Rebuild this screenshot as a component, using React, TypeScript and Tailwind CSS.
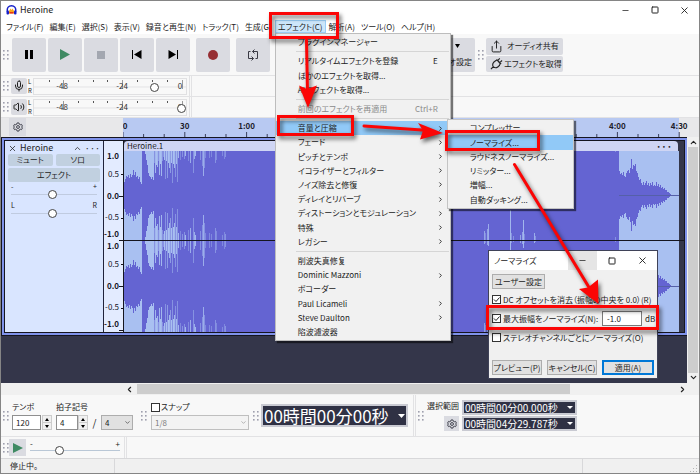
import type { ReactNode } from 'react'
import { ChevronDown, ChevronLeft, ChevronRight, ChevronUp, Mic, Minus, Share, Square, Volume2, X } from 'lucide-react'

interface MenuEntry {
  label: string
  shortcut?: string
  disabled?: boolean
  active?: boolean
  submenu?: boolean
}

const menuGroups: MenuEntry[][] = [
  [{ label: 'プラグインマネージャー' }],
  [
    { label: 'リアルタイムエフェクトを登録', shortcut: 'E' },
    { label: 'ほかのエフェクトを取得...' },
    { label: 'AIエフェクトを取得...' },
  ],
  [{ label: '前回のエフェクトを再適用', shortcut: 'Ctrl+R', disabled: true }],
  [
    { label: '音量と圧縮', active: true, submenu: true },
    { label: 'フェード', submenu: true },
    { label: 'ピッチとテンポ', submenu: true },
    { label: 'イコライザーとフィルター', submenu: true },
    { label: 'ノイズ除去と修復', submenu: true },
    { label: 'ディレイとリバーブ', submenu: true },
    { label: 'ディストーションとモジュレーション', submenu: true },
    { label: '特殊', submenu: true },
    { label: 'レガシー', submenu: true },
  ],
  [
    { label: '削波失真修复' },
    { label: 'Dominic Mazzoni', submenu: true },
    { label: 'ボコーダー' },
    { label: 'Paul Licameli', submenu: true },
    { label: 'Steve Daulton', submenu: true },
    { label: '陷波濾波器' },
  ],
]

const volumeItems = ['コンプレッサー...', 'ノーマライズ...', 'ラウドネスノーマライズ...', 'リミッター...', '増幅...', '自動ダッキング...']

const times = ['0', '30', '1:00', '1:30', '2:00', '2:30', '3:00', '3:30', '4:00', '4:30']

// [x, depth from the clip edge, opacity]
const quiet = [31, 28, 25, 26, 24, 27, 23, 26, 24, 19, 24, 21, 26, 25, 28, 26, 31, 33]
const rise = [3, 9, 14, 22, 25, 26, 28, 26, 29]
const peaks: [number, number, number][] = [
  [30, 12, 0.5], [31, 22, 0.9], [32, 14, 1], [33, 16, 0.9], [34, 10, 0.5], [35, 24, 0.9], [36, 13, 1],
  [37, 25, 0.9], [38, 10, 0.5], [39, 6, 0.5], [40, 9, 1], [41, 28, 0.5], [42, 10, 1], [43, 27, 0.6],
  [44, 12, 1], [45, 17, 0.9], [46, 22, 0.6], [47, 12, 1], [48, 32, 0.5], [49, 13, 1], [50, 17, 0.9],
  [51, 26, 0.5], [52, 13, 0.9], [53, 31, 0.5], [54, 7, 0.9], [56, 9, 0.4], [58, 6, 0.5], [60, 8, 0.5],
  [61, 5, 0.9], [64, 10, 0.4], [66, 12, 0.8], [69, 22, 0.5], [70, 8, 0.8], [71, 5, 0.9], [76, 9, 0.5],
  [78, 15, 0.5], [79, 25, 0.8], [80, 17, 0.5], [81, 7, 0.4], [85, 7, 0.4], [87, 6, 0.4], [91, 12, 0.5],
  [92, 9, 0.4], [98, 5, 0.4], [100, 8, 0.4], [101, 6, 0.5],
]
const latePeaks: [number, number, number][] = [
  [360, 9, 0.7], [361, 7, 0.4], [363, 11, 0.7], [364, 16, 0.8], [386, 30, 0.9], [387, 7, 0.5], [389, 4, 0.5],
  [396, 5, 0.7], [398, 8, 0.7], [399, 20, 0.9], [400, 6, 0.4], [410, 7, 0.8], [411, 4, 0.5], [491, 3, 0.5],
]
const tail = [
  24, 21, 22, 20, 23, 19, 18, 22, 24, 25, 22, 27, 36, 26, 30, 29, 31, 24, 22, 18, 15, 16, 12, 10, 13, 10, 12, 14,
  10, 12, 9, 12, 10, 13, 9, 10, 9, 13, 9, 11, 8, 10, 7, 8, 6, 7, 5, 5, 3, 3, 2, 1,
]

function Grip() {
  return (
    <svg className="h-[10px] w-[6px] shrink-0" fill="#9fa0ae">
      {[0, 4].map((x) => [0, 4, 8].map((y) => <rect key={`${x}-${y}`} x={x} y={y} width="1.6" height="1.6" />))}
    </svg>
  )
}

function ToolButton({ label, children }: { label: string; children: ReactNode }) {
  return (
    <button aria-label={label} className="flex h-[34px] w-[34px] shrink-0 items-center justify-center rounded-xs bg-[#dadbe1]">
      {children}
    </button>
  )
}

function Gear() {
  return (
    <svg viewBox="0 0 16 16" className="size-[10px]" fill="none" stroke="#3b3c48" strokeWidth="1.5">
      <path d="M6.5 1.5h3l.5 2 1.6.9 2-.6 1.5 2.6L13.700 8l1.400 1.600-1.500 2.600-2-.6-1.600.9-.5 2h-3l-.5-2-1.600-.9-2 .6L.9 9.600 2.300 8 .9 6.400l1.500-2.600 2 .6L6 3.500z" />
      <circle cx="8" cy="8" r="2.300" />
    </svg>
  )
}

function Slider({ label, value }: { label: string; value: number }) {
  return (
    <input
      type="range"
      aria-label={label}
      defaultValue={value}
      className="block h-[9px] w-full appearance-none bg-transparent [&::-webkit-slider-thumb]:size-[9px] [&::-webkit-slider-thumb]:appearance-none [&::-webkit-slider-thumb]:rounded-full [&::-webkit-slider-thumb]:border [&::-webkit-slider-thumb]:border-[#444] [&::-webkit-slider-thumb]:bg-white"
    />
  )
}

function Meter({ label, value, icon }: { label: string; value: number; icon: ReactNode }) {
  return (
    <div className="flex h-[21px] items-center border-b border-[#e2e2e4] bg-[#f8f8f8] pl-[2px]">
      <Grip />
      <button aria-label={label} className="ml-[2px] flex size-[16px] items-center justify-center rounded-xs bg-[#dadbe1]">
        {icon}
      </button>
      <div className="w-[6px] pl-px text-[6px] leading-[9px] text-[#222]">
        <div>L</div>
        <div>R</div>
      </div>
      <div className="relative h-[17px] w-[154px] border border-[#e0e0e2]">
        <svg className="absolute inset-0 size-full" stroke="#555">
          <path d="M0 8H153" stroke="#e3e3e5" />
          <path d="M15.500 1v2M44.500 1v2M59.500 1v2M73.500 1v2M103.500 1v2M118.500 1v2M133.500 1v2" />
          <path d="M29.500 1v9M88.500 1v9M148.500 1v9" stroke="#999" />
          <g stroke="none" fill="#333" fontSize="8" textAnchor="middle">
            <text x="28" y="10">-48</text>
            <text x="88" y="10">-24</text>
            <text x="146" y="10">0</text>
          </g>
        </svg>
        <div className="relative mt-[4px]">
          <Slider label={`${label}レベル`} value={value} />
        </div>
      </div>
      <div className="ml-[2px] h-full w-[3px] border-x border-[#e2e2e4]" />
    </div>
  )
}

function EffectMenu() {
  return (
    <div className="absolute top-full left-0 z-10 flex h-[308px] w-[176px] flex-col border border-[#bdbdbd] bg-[#f1f1f1] py-px text-left shadow-[2px_2px_1px_#0008]">
      {menuGroups.map((group, i) => (
        <div key={i} className="contents">
          {i > 0 && <div className="my-[2px] mr-px ml-[20px] h-px shrink-0 bg-[#d5d5d5]" />}
          {group.map((item) => (
            <div
              key={item.label}
              className={`relative flex min-h-0 flex-1 items-center ${item.active ? 'bg-[#91c9f7]' : ''} ${item.disabled ? 'text-[#8a8a8a]' : ''}`}
            >
              <button className="flex w-full items-center justify-between pr-[6px] pl-[22px] whitespace-nowrap">
                <span>{item.label}</span>
                {item.shortcut && <span className="pr-[6px]">{item.shortcut}</span>}
                {item.submenu && <ChevronRight className="size-[7px]" strokeWidth={3} />}
              </button>
              {item.active && (
                <div className="absolute top-[-2px] left-[171px] flex h-[90px] w-[127px] flex-col border border-[#c4c4c4] bg-[#f1f1f1] py-px shadow-[2px_2px_1px_#0008]">
                  {volumeItems.map((name, n) => (
                    <button key={name} className={`min-h-0 flex-1 pl-[22px] text-left whitespace-nowrap ${n === 1 ? 'bg-[#91c9f7]' : ''}`}>
                      {name}
                    </button>
                  ))}
                </div>
              )}
            </div>
          ))}
        </div>
      ))}
    </div>
  )
}

function MenuBar() {
  return (
    <nav className="flex h-[15px] items-center gap-[6px] bg-white pl-[5px] whitespace-nowrap">
      {['ファイル(F)', '編集(E)', '選択(S)', '表示(V)', '録音と再生(N)', 'トラック(T)', '生成(G)'].map((m) => (
        <button key={m}>{m}</button>
      ))}
      <div className="relative -mx-[3px]">
        <button className="block h-[13px] border border-[#99cdf5] bg-[#cce6fa] px-[2px] leading-[11px]">エフェクト(C)</button>
        <EffectMenu />
      </div>
      {['解析(A)', 'ツール(O)', 'ヘルプ(H)'].map((m) => (
        <button key={m}>{m}</button>
      ))}
    </nav>
  )
}

function TransportBar() {
  return (
    <div className="flex h-[42px] items-center border-b border-[#e2e2e4] bg-[#f8f8f8] pl-[2px]">
      <Grip />
      <div className="ml-[3px] flex gap-[2px]">
        <ToolButton label="一時停止">
          <svg className="h-[10px] w-[8px]"><path d="M0 0h3v9H0zM5 0h3v9H5z" /></svg>
        </ToolButton>
        <ToolButton label="再生">
          <svg className="h-[11px] w-[10px]" fill="#3f8a63"><path d="M0 0l10 5.500L0 11z" /></svg>
        </ToolButton>
        <ToolButton label="停止">
          <span className="size-[8px] bg-[#a3a7b0]" />
        </ToolButton>
        <ToolButton label="先頭へ">
          <svg className="h-[9px] w-[10px]"><path d="M0 0h1v9H0zM9.500 0v9L2 4.500z" /></svg>
        </ToolButton>
        <ToolButton label="末尾へ">
          <svg className="h-[9px] w-[10px]"><path d="M9 0h1v9H9zM.5 0v9L8 4.500z" /></svg>
        </ToolButton>
      </div>
      <div className="ml-[6px] flex gap-[6px]">
        <ToolButton label="録音">
          <span className="size-[10px] rounded-full bg-[#962f33]" />
        </ToolButton>
        <ToolButton label="ループ">
          <svg viewBox="0 0 12 12" className="size-[12px]" fill="none" stroke="#3a3a44">
            <path d="M3.500 2.500H1.500v7h5M8.500 9.500h2v-7h-5M7.500.5l-2 2 2 2M4.500 7.500l2 2-2 2" />
          </svg>
        </ToolButton>
      </div>
      <div className="ml-[5px] flex w-[200px] items-center justify-between">
        <Grip />
        <button className="h-[34px] rounded-xs bg-[#dadbe1] px-[3px] pt-[2px] whitespace-nowrap">
          <svg className="mx-auto mb-[7px] h-[5px] w-[32px]"><path d="M25 0h5l-2.500 4z" /></svg>
          <span className="block">オーディオ設定</span>
        </button>
      </div>
      <div className="ml-[3px] flex items-center gap-[2px]">
        <Grip />
        <div className="flex w-[77px] flex-col gap-px">
          <button className="flex h-[17px] items-center rounded-xs bg-[#dadbe1] pl-[4px]">
            <Share className="size-[13px]" strokeWidth={1.8} />
            <span className="flex-1">オーディオ共有</span>
          </button>
          <button className="flex h-[16px] items-center rounded-xs bg-[#dadbe1] pl-[4px]">
            <svg viewBox="0 0 14 14" className="size-[13px]" fill="none" stroke="#222" strokeWidth="1.200">
              <path d="M1 13l2.500-2.500M3.500 10.500C2 8 3 6 6 4l1.500-.8 3.500 3.800-.8 2C8.500 11.500 6 12.500 3.500 10.500zM7 2.500l5 5M8.300 3.800L10.500 1.500M10.500 6L13 3.800" />
            </svg>
            <span className="flex-1">エフェクトを取得</span>
          </button>
        </div>
      </div>
    </div>
  )
}

function Timeline() {
  return (
    <div className="flex h-[19px] bg-[#e8e8ea]">
      <div className="w-[122px] pl-[8px]">
        <button aria-label="タイムライン設定" className="flex h-[18px] w-[17px] items-center justify-center bg-[#dadbe1]">
          <Gear />
        </button>
      </div>
      <svg className="h-[19px] flex-1" fontSize="8" fontWeight="700" fill="#1d1d2b">
        <rect width="556" height="19" fill="#b8c9f2" />
        {times.map((t, i) => (
          <g key={t}>
            <text x={i === 0 ? 2 : i * 61.8} y="11" textAnchor="middle">{t}</text>
            <path d={`M${i * 61.8} 14v5${i < 9 ? 'm20.600-3v3m20.600-3v3' : ''}`} stroke="#3a3f5c" />
          </g>
        ))}
      </svg>
    </div>
  )
}

function Channel({ y, h }: { y: number; h: number }) {
  const spikes: [number, number, number][] = [
    ...quiet.map((d, i): [number, number, number] => [i, d, 1]),
    ...rise.map((d, i): [number, number, number] => [i + 21, d, 1]),
    ...peaks,
  ]
  const mid = Math.floor(h / 2)
  return (
    <g transform={`translate(0 ${y})`} shapeRendering="crispEdges">
      <rect width="495" height={h} fill="#6464d2" />
      <g fill="#a9c0f1">
        {spikes.map(([x, d, o]) => (
          <g key={x} opacity={o}>
            <rect x={x} width="1" height={d} />
            <rect x={x} y={h - d} width="1" height={d} />
          </g>
        ))}
        {latePeaks.map(([x, d, o]) => (
          <g key={x} opacity={o}>
            <rect x={x} width="1" height={Math.round(d / 3)} />
            <rect x={x} y={h - d} width="1" height={d} />
          </g>
        ))}
      </g>
      <g fill="#6464d2">
        {tail.map((a, i) => (
          <rect key={i} x={495 + i} y={mid - a} width="1" height={a * 2} />
        ))}
      </g>
      <path d={`M495 ${mid + 0.5}H555`} stroke="#5560a8" />
    </g>
  )
}

function Ruler() {
  return (
    <svg className="h-[191px] w-[20px] shrink-0 border-l border-[#20223a] bg-[#e3ebff]" fontSize="8" fill="#15151f" textAnchor="end">
      {[11, 101].map((top) => (
        <g key={top}>
          <g fontWeight="700">
            <text x="15" y={top + 7}>1.0</text>
            <text x="15" y={top + 47}>0.0</text>
            <text x="15" y={top + 85}>-1.0</text>
          </g>
          <text x="15" y={top + 25}>0.5</text>
          <text x="15" y={top + 68}>-0.5</text>
          <path d={`M17 ${top + 22.5}h3M15 ${top + 44.5}h5M17 ${top + 66.5}h3M15 ${top + 88.5}h5`} stroke="#15151f" />
        </g>
      ))}
    </svg>
  )
}

function Track() {
  return (
    <div className="border-2 border-[#7f92ea] bg-[#34364a] outline outline-[#15151f]">
      <div className="flex border border-[#15151f]">
        <div className="w-[98px] shrink-0 bg-[#d9e5ff] px-[3px] pt-px">
          <div className="flex h-[12px] items-center text-[9px]">
            <button aria-label="閉じる"><X className="size-[9px]" /></button>
            <span className="ml-[3px] flex-1">Heroine</span>
            <ChevronUp className="size-[9px]" />
            <span className="ml-[3px] leading-none">···</span>
          </div>
          <div className="flex gap-[3px]">
            <button className="h-[12px] flex-1 rounded-xs bg-[#c1d0e0]">ミュート</button>
            <button className="h-[12px] flex-1 rounded-xs bg-[#c1d0e0]">ソロ</button>
          </div>
          <button className="mt-[2px] mb-px block h-[14px] w-full rounded-xs bg-[#c1d0e0]">エフェクト</button>
          {[['-', '+', '音量'], ['L', 'R', 'パン']].map(([a, b, name]) => (
            <div key={name} className="px-[3px] pb-[3px] text-[7px] leading-[7px]">
              <div className="flex justify-between">
                <span>{a}</span>
                <span>{b}</span>
              </div>
              <div className="bg-linear-to-r from-[#c0cbe0] to-[#c0cbe0] bg-[length:100%_1px] bg-center bg-no-repeat">
                <Slider label={name} value={48} />
              </div>
            </div>
          ))}
        </div>
        <Ruler />
        <div className="min-w-0 flex-1 border-l border-[#15151f]">
          <div className="mr-[6px] flex h-[10px] items-center justify-between rounded-t-sm bg-[#cfd5f4] pr-[6px] pl-[3px]">
            <span className="leading-[10px]">Heroine.1</span>
            <span className="text-[9px] leading-none font-bold">···</span>
          </div>
          <svg className="block h-[181px] w-full">
            <rect width="555" height="181" fill="#a9c0f1" />
            <Channel y={0} h={89} />
            <Channel y={90} h={91} />
            <path d="M0 89.500H562" stroke="#15151f" />
          </svg>
        </div>
      </div>
    </div>
  )
}

function NormalizeDialog() {
  const button = 'h-[15px] border border-[#adadad] bg-[#e1e1e1] leading-[13px] whitespace-nowrap'
  return (
    <div role="dialog" aria-label="ノーマライズ" className="absolute top-[113px] left-[487px] z-20 h-[129px] w-[170px] border border-[#3f4258] bg-[#f0f0f0]">
      <div className="flex h-[19px] items-center bg-white pl-[5px]">
        <span className="flex-1">ノーマライズ</span>
        <button aria-label="最小化" className="flex h-full w-[29px] items-center justify-center bg-[#e5e5e5]"><Minus className="size-[9px]" /></button>
        <button aria-label="最大化" className="flex w-[30px] justify-center"><Square className="size-[8px]" strokeWidth={3} /></button>
        <button aria-label="閉じる" className="flex w-[30px] justify-center"><X className="size-[11px]" /></button>
      </div>
      <div className="px-[3px] pt-[4px]">
        <button className={`${button} block w-[53px]`}>ユーザー設定</button>
        <label className="mt-[1px] flex h-[19px] items-center gap-[2px] whitespace-nowrap">
          <CheckBox checked />
          DC オフセットを消去（振幅の中央を 0.0）(R)
        </label>
        <div className="flex h-[19px] items-center">
          <label className="flex flex-1 items-center gap-[2px] whitespace-nowrap">
            <CheckBox checked />
            最大振幅をノーマライズ(N):
          </label>
          <input aria-label="最大振幅" defaultValue="-1.0" className="h-[15px] w-[40px] border border-[#7a7a7a] bg-white pl-[4px]" />
          <span className="w-[12px] pl-[3px]">dB</span>
        </div>
        <label className="flex h-[19px] items-center gap-[2px] whitespace-nowrap">
          <CheckBox />
          ステレオチャンネルごとにノーマライズ(O)
        </label>
        <div className="mt-[13px] flex gap-[5px]">
          <button className={`${button} flex-1`}>プレビュー(P)</button>
          <button className={`${button} flex-1`}>キャンセル(C)</button>
          <button className="h-[15px] flex-1 border-2 border-[#0078d7] bg-[#e1e1e1] leading-[11px]">適用(A)</button>
        </div>
      </div>
    </div>
  )
}

function CheckBox({ checked = false }: { checked?: boolean }) {
  return (
    <span className="relative size-[9px] shrink-0">
      <input type="checkbox" defaultChecked={checked} className="peer block size-[9px] appearance-none border border-[#333] bg-white" />
      <svg viewBox="0 0 9 9" className="pointer-events-none absolute inset-0 hidden size-[9px] peer-checked:block" fill="none" stroke="#222">
        <path d="M2 4.500l2 2 3.500-4" />
      </svg>
    </span>
  )
}

function Spinner() {
  return (
    <span className="flex h-[15px] w-[10px] flex-col border border-[#ccc] bg-[#f0f0f0]">
      <button aria-label="増やす" className="flex flex-1 items-center justify-center border-b border-[#ccc]">
        <svg className="h-[3px] w-[4px]"><path d="M0 3h4L2 0z" /></svg>
      </button>
      <button aria-label="減らす" className="flex flex-1 items-center justify-center">
        <svg className="h-[3px] w-[4px]"><path d="M0 0h4L2 3z" /></svg>
      </button>
    </span>
  )
}

function TimeField({ value }: { value: string }) {
  return (
    <button className="flex h-[15px] items-center justify-between border-2 border-[#c9cad2] bg-[#2f3144] pr-[2px] pl-px text-[10px] whitespace-nowrap text-white">
      <span className="leading-none">{value}</span>
      <svg className="h-[3px] w-[6px]" fill="#fff"><path d="M0 0h6L3 3z" /></svg>
    </button>
  )
}

function BottomBar() {
  const field = 'h-[15px] border border-[#8f8f8f] bg-white pl-[3px]'
  return (
    <div className="flex h-[42px] items-center border-b border-[#e2e2e4] bg-[#f8f8f8] pl-[2px]">
      <Grip />
      <div className="ml-[3px]">
        <label htmlFor="tempo" className="mb-[2px] block leading-[12px]">テンポ</label>
        <div className="flex gap-px">
          <input id="tempo" defaultValue="120" className={`${field} w-[29px]`} />
          <Spinner />
        </div>
      </div>
      <div className="ml-[4px]">
        <label htmlFor="beats" className="mb-[2px] block leading-[12px]">拍子記号</label>
        <div className="flex items-center">
          <input id="beats" defaultValue="4" className={`${field} w-[22px]`} />
          <Spinner />
          <span className="w-[13px] text-center text-[10px] leading-none">/</span>
          <span className="relative">
            <select aria-label="拍子の分母" className="block h-[15px] w-[32px] appearance-none border border-[#adadad] bg-[#e1e1e1] pl-[3px]">
              <option>4</option>
            </select>
            <ChevronDown className="pointer-events-none absolute top-[4px] right-[2px] size-[7px]" />
          </span>
        </div>
      </div>
      <div className="ml-[8px]"><Grip /></div>
      <div className="ml-[4px]">
        <label className="mb-[2px] flex h-[12px] items-center gap-px">
          <CheckBox />
          スナップ
        </label>
        <span className="relative block">
          <select aria-label="スナップ単位" disabled className="block h-[15px] w-[98px] appearance-none border border-[#bfbfbf] bg-[#f3f3f3] pl-[3px] text-[#7b7b7b]">
            <option>1/8</option>
          </select>
          <ChevronDown className="pointer-events-none absolute top-[4px] right-[2px] size-[7px] text-[#888]" />
        </span>
      </div>
      <div className="ml-[4px]"><Grip /></div>
      <button className="ml-[2px] flex h-[23px] w-[147px] items-center justify-between border-2 border-[#c9cad2] bg-[#2f3144] pr-px pl-px text-[17px] whitespace-nowrap text-white">
        <span className="leading-none">00時間00分00秒</span>
        <svg className="h-[4px] w-[7px]" fill="#fff"><path d="M0 0h7L3.500 4z" /></svg>
      </button>
      <div className="ml-[5px] h-full w-[3px] border-x border-[#e2e2e4]" />
      <div className="ml-[2px]"><Grip /></div>
      <div className="ml-[3px] flex w-[32px] flex-col items-end gap-[4px]">
        <span className="leading-[12px] whitespace-nowrap">選択範囲</span>
        <button aria-label="選択範囲の設定" className="flex size-[15px] items-center justify-center bg-[#dadbe1]">
          <Gear />
        </button>
      </div>
      <div className="ml-[3px] flex w-[115px] flex-col gap-px">
        <TimeField value="00時間00分00.000秒" />
        <TimeField value="00時間04分29.787秒" />
      </div>
    </div>
  )
}

// Red callouts laid over the window
function Callouts() {
  return (
    <svg className="pointer-events-none absolute inset-0 z-30 size-full [filter:drop-shadow(2px_3px_2px_#0009)]" fill="none" stroke="#fb0505" strokeWidth="3">
      <rect x="269.500" y="12.500" width="67" height="24" />
      <rect x="277.500" y="115.500" width="74" height="18" />
      <rect x="445.500" y="130.500" width="92" height="18" />
      <rect x="486.500" y="305.500" width="170" height="22" />
      <path d="M305.500 39L306.500 92M363 125L428 129.500M513.500 163.500L589 288" strokeLinecap="round" />
      <g fill="#fb0505" stroke="none">
        <path d="M307 107L298 84.500L306 88L316 84.500z" />
        <path d="M442 132L417 122L422 129.500L419 138.500z" />
        <path d="M597.500 303L578 288L587 286.500L597 278.500z" />
      </g>
    </svg>
  )
}

export default function App() {
  return (
    <div className="relative flex min-h-screen w-full flex-col overflow-hidden border border-[#858585] bg-[#f0f0f0] font-['Noto_Sans_CJK_JP',sans-serif] text-[8px] leading-[12px] text-[#222] [font-feature-settings:'palt']">
      <header className="flex h-[18px] items-center bg-white pl-[5px]">
        <svg viewBox="0 0 22 20" className="h-[10px] w-[11px]">
          <path d="M3 13C1 5 6 1.500 11 1.500S21 5 19 13" fill="none" stroke="#1620c8" strokeWidth="3" />
          <path d="M6 12l3-5 2 3 2-3 3 5v5H6z" fill="#f7a51c" />
          <path d="M7 14h8v3H7z" fill="#e8321c" />
          <rect x="1" y="11" width="5" height="8" rx="2" fill="#1620c8" />
          <rect x="16" y="11" width="5" height="8" rx="2" fill="#1620c8" />
        </svg>
        <span className="ml-[3px] flex-1 text-[9px]">Heroine</span>
        <button aria-label="最小化" className="flex w-[30px] justify-center"><Minus className="size-[9px]" /></button>
        <button aria-label="最大化" className="flex w-[29px] justify-center"><Square className="size-[8px]" strokeWidth={3} /></button>
        <button aria-label="閉じる" className="flex w-[30px] justify-center"><X className="size-[11px]" /></button>
      </header>
      <MenuBar />
      <TransportBar />
      <Meter label="録音" value={81} icon={<Mic className="size-[12px]" strokeWidth={2} />} />
      <Meter label="再生" value={100} icon={<Volume2 className="size-[12px]" strokeWidth={2} />} />
      <Timeline />
      <main className="relative flex flex-1 bg-[#34364a]">
        <div className="min-w-0 flex-1 pt-px pl-px">
          <Track />
        </div>
        <div className="flex w-[12px] flex-col items-center bg-[#f0f0f0] py-[1px]">
          <ChevronUp className="size-[9px]" strokeWidth={3} />
          <div className="w-[10px] flex-1 bg-[#cdcdcd]" />
          <ChevronDown className="size-[9px]" strokeWidth={3} />
        </div>
        <NormalizeDialog />
      </main>
      <div className="flex h-[12px] items-center pr-[12px] pl-[124px]">
        <ChevronLeft className="size-[9px]" strokeWidth={3} />
        <div className="ml-[3px] flex h-[10px] flex-1">
          <div className="w-4/5 bg-[#cdcdcd]" />
        </div>
        <ChevronRight className="size-[9px]" strokeWidth={3} />
      </div>
      <BottomBar />
      <div className="flex h-[22px] items-center border-b border-[#d8d8da] bg-[#f8f8f8] pl-[2px]">
        <Grip />
        <button aria-label="指定速度で再生" className="flex size-[17px] items-center justify-center bg-[#dadbe1]">
          <svg className="h-[10px] w-[10px]" fill="#3f8a63"><path d="M0 0l10 5L0 10z" /></svg>
        </button>
        <div className="ml-[4px] w-[90px]">
          <div className="flex h-[5px] justify-between leading-[5px]">
            <span>-</span>
            <span>+</span>
          </div>
          <div className="bg-linear-to-r from-[#b9c7d6] to-[#b9c7d6] bg-[length:100%_1px] bg-center bg-no-repeat">
            <Slider label="再生速度" value={31} />
          </div>
        </div>
        <div className="ml-[4px] h-full w-[3px] border-x border-[#e2e2e4]" />
      </div>
      <footer className="flex h-[14px] items-center pl-[9px]">
        <span className="w-[104px]">停止中。</span>
        <div className="h-full flex-1 border-x border-[#d8d8da]" />
        <svg className="mr-px ml-[107px] size-[8px] self-end" fill="#b5b5b5">
          <path d="M6 0h1v1H6zM3 3h1v1H3zM6 3h1v1H6zM0 6h1v1H0zM3 6h1v1H3zM6 6h1v1H6z" />
        </svg>
      </footer>
      <Callouts />
    </div>
  )
}
